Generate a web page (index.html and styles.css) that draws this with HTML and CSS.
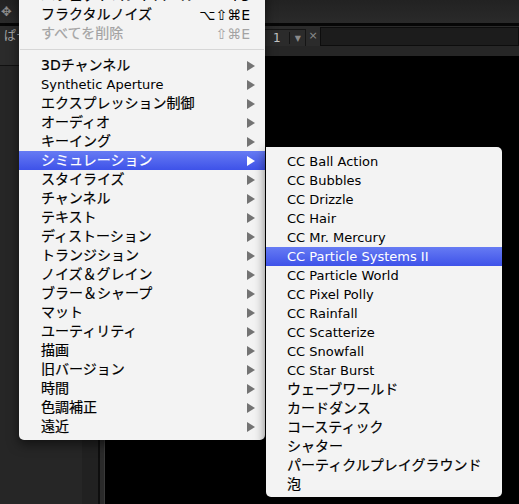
FILE: index.html
```html
<!DOCTYPE html>
<html lang="ja">
<head>
<meta charset="utf-8">
<title>Effects menu</title>
<link rel="stylesheet" href="styles.css">
</head>
<body>
<div class="screen">
  <div class="topbar"><span class="move">✥</span></div>
  <div class="rule"></div>
  <div class="tabbar">
    <span class="tablabel">ぱー</span>
    <span class="spacer"></span>
    <div class="tabctrl"><span class="num">1</span><span class="vdiv"></span><span class="dd">▼</span></div>
    <span class="close">×</span>
    <div class="field"></div>
  </div>
  <div class="work">
    <div class="leftcol"><div class="lphead"></div></div>
    <div class="col2"></div>
    <div class="line1"></div>
    <div class="col3"></div>
    <div class="line2"></div>
    <div class="viewer"></div>
  </div>

  <div class="menu main">
    <div class="item"><span class="label">エフェクトコントロール</span><span class="key">F3</span></div>
    <div class="item"><span class="label">フラクタルノイズ</span><span class="key">⌥⇧⌘E</span></div>
    <div class="item dis"><span class="label">すべてを削除</span><span class="key">⇧⌘E</span></div>
    <div class="sepr"></div>
    <div class="item"><span class="label">3Dチャンネル</span><span class="arrow"></span></div>
    <div class="item"><span class="label l">Synthetic Aperture</span><span class="arrow"></span></div>
    <div class="item"><span class="label">エクスプレッション制御</span><span class="arrow"></span></div>
    <div class="item"><span class="label">オーディオ</span><span class="arrow"></span></div>
    <div class="item"><span class="label">キーイング</span><span class="arrow"></span></div>
    <div class="item hl"><span class="label">シミュレーション</span><span class="arrow"></span></div>
    <div class="item"><span class="label">スタイライズ</span><span class="arrow"></span></div>
    <div class="item"><span class="label">チャンネル</span><span class="arrow"></span></div>
    <div class="item"><span class="label">テキスト</span><span class="arrow"></span></div>
    <div class="item"><span class="label">ディストーション</span><span class="arrow"></span></div>
    <div class="item"><span class="label">トランジション</span><span class="arrow"></span></div>
    <div class="item"><span class="label">ノイズ＆グレイン</span><span class="arrow"></span></div>
    <div class="item"><span class="label">ブラー＆シャープ</span><span class="arrow"></span></div>
    <div class="item"><span class="label">マット</span><span class="arrow"></span></div>
    <div class="item"><span class="label">ユーティリティ</span><span class="arrow"></span></div>
    <div class="item"><span class="label">描画</span><span class="arrow"></span></div>
    <div class="item"><span class="label">旧バージョン</span><span class="arrow"></span></div>
    <div class="item"><span class="label">時間</span><span class="arrow"></span></div>
    <div class="item"><span class="label">色調補正</span><span class="arrow"></span></div>
    <div class="item"><span class="label">遠近</span><span class="arrow"></span></div>
  </div>

  <div class="menu sub">
    <div class="item"><span class="label l">CC Ball Action</span></div>
    <div class="item"><span class="label l">CC Bubbles</span></div>
    <div class="item"><span class="label l">CC Drizzle</span></div>
    <div class="item"><span class="label l">CC Hair</span></div>
    <div class="item"><span class="label l">CC Mr. Mercury</span></div>
    <div class="item hl"><span class="label l">CC Particle Systems II</span></div>
    <div class="item"><span class="label l">CC Particle World</span></div>
    <div class="item"><span class="label l">CC Pixel Polly</span></div>
    <div class="item"><span class="label l">CC Rainfall</span></div>
    <div class="item"><span class="label l">CC Scatterize</span></div>
    <div class="item"><span class="label l">CC Snowfall</span></div>
    <div class="item"><span class="label l">CC Star Burst</span></div>
    <div class="item"><span class="label">ウェーブワールド</span></div>
    <div class="item"><span class="label">カードダンス</span></div>
    <div class="item"><span class="label">コースティック</span></div>
    <div class="item"><span class="label">シャター</span></div>
    <div class="item"><span class="label">パーティクルプレイグラウンド</span></div>
    <div class="item"><span class="label">泡</span></div>
  </div>
</div>
</body>
</html>
```
FILE: styles.css
```css
html, body {
  margin: 0;
  padding: 0;
  background: #000;
}
body {
  width: 519px;
  height: 504px;
  overflow: hidden;
  font-family: "DejaVu Sans", "Noto Sans CJK JP", sans-serif;
}
.screen {
  position: relative;
  width: 519px;
  height: 504px;
  display: flex;
  flex-direction: column;
  overflow: hidden;
}
.topbar {
  height: 23px;
  background: linear-gradient(#222222, #2a2a2a);
  display: flex;
  align-items: center;
  padding-left: 1px;
}
.move {
  color: #8c8c8c;
  font-size: 13px;
  line-height: 13px;
}
.rule {
  height: 3px;
  background: #060606;
}
.tabbar {
  height: 20px;
  background: #2b2b2b;
  display: flex;
  align-items: stretch;
}
.tablabel {
  padding-left: 4px;
  color: #a8a8a8;
  font-size: 12px;
  line-height: 20px;
}
.spacer {
  flex: 1;
}
.tabctrl {
  width: 50px;
  margin-top: 3px;
  box-sizing: border-box;
  border: 1px solid #151515;
  border-bottom: none;
  display: flex;
  align-items: center;
  padding-left: 16px;
}
.num {
  color: #c4c4c4;
  font-size: 12px;
  line-height: 14px;
}
.vdiv {
  width: 1px;
  height: 12px;
  background: #141414;
  margin-left: 8px;
}
.dd {
  color: #8a8a8a;
  font-size: 8px;
  margin-left: 5px;
}
.close {
  width: 14px;
  text-align: center;
  color: #8c8c8c;
  font-size: 11px;
  line-height: 20px;
}
.field {
  width: 199px;
  margin-top: 1px;
  box-sizing: border-box;
  background: #1c1c1c;
  border: 1px solid #0d0d0d;
}
.work {
  flex: 1;
  display: flex;
}
.leftcol {
  width: 82px;
  background: #262626;
}
.lphead {
  height: 19px;
  background: #2b2b2b;
  border-bottom: 1px solid #111;
}
.col2 {
  width: 16px;
  background: #212121;
}
.line1 {
  width: 2px;
  background: #0e0e0e;
}
.col3 {
  width: 4px;
  background: #2a2a2a;
}
.line2 {
  width: 1px;
  background: #3a3a3a;
}
.viewer {
  flex: 1;
  background: #000;
  border-top: 10px solid #262626;
}

/* menus */
.menu {
  position: absolute;
  background: #f3f3f3;
  box-shadow: 0 4px 12px rgba(0, 0, 0, 0.55);
}
.main {
  left: 19px;
  top: -14px;
  width: 246px;
  padding-bottom: 4px;
  border-radius: 0 0 5px 5px;
  z-index: 1;
}
.sub {
  left: 266px;
  top: 147px;
  width: 236px;
  padding: 5px 0 3px;
  border-radius: 0 5px 5px 5px;
  z-index: 2;
}
.item {
  height: 19px;
  box-sizing: border-box;
  display: flex;
  align-items: center;
  padding-left: 22px;
  padding-right: 10px;
  padding-bottom: 3px;
  font-size: 14px;
  color: #000;
  white-space: nowrap;
  -webkit-text-stroke: 0.2px currentColor;
}
.sub .item {
  padding-left: 21px;
}
.label {
  flex: 1;
}
.l {
  font-size: 13px;
  padding-top: 3px;
  -webkit-text-stroke: 0;
}
.key {
  padding-top: 3px;
  padding-right: 5px;
  -webkit-text-stroke: 0;
}
.arrow {
  width: 0;
  height: 0;
  margin-top: 3px;
  border-left: 8px solid #737373;
  border-top: 5px solid transparent;
  border-bottom: 5px solid transparent;
}
.item.hl {
  background: linear-gradient(#667bf3, #3e52e9);
  color: #fff;
}
.item.hl .arrow {
  border-left-color: #fff;
}
.item.dis {
  color: #a3a3a3;
}
.sepr {
  height: 13px;
  display: flex;
  align-items: center;
}
.sepr::after {
  content: "";
  flex: 1;
  height: 1px;
  background: #d6d6d6;
  margin: 0 1px;
}
```
